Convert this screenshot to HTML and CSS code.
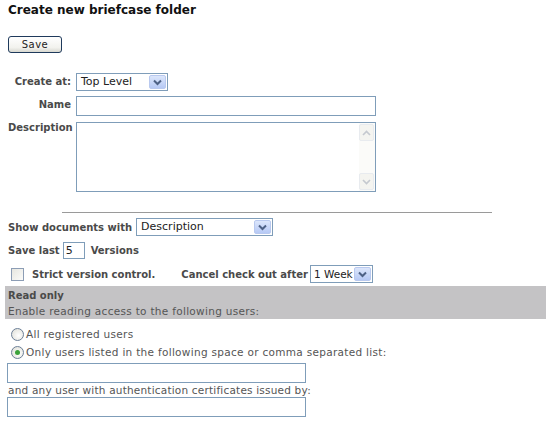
FILE: index.html
```html
<!DOCTYPE html>
<html lang="en">
<head>
  <meta charset="UTF-8" />
  <title>Create new briefcase folder</title>
  <link rel="stylesheet" href="styles.css">
</head>
<body>
  <div class="page">
    <h1>Create new briefcase folder</h1>
    <button class="btn">Save</button>

    <div class="form-grid">
      <label class="lbl row-select">Create at:</label>
      <div class="row-select">
        <span class="select w-top">
          <span class="select-text">Top Level</span>
          <span class="select-arrow"><svg width="9" height="7" viewBox="0 0 9 7"><path d="M1 1.5 L4.5 5 L8 1.5" fill="none" stroke="#4d6185" stroke-width="2"/></svg></span>
        </span>
      </div>

      <label class="lbl row-name">Name</label>
      <div class="row-name"><input class="text w-name" type="text"></div>

      <label class="lbl row-desc">Description</label>
      <div class="row-desc">
        <div class="textarea">
          <textarea></textarea>
          <div class="scrollbar">
            <span class="sb-btn"><svg width="9" height="6" viewBox="0 0 9 6"><path d="M1 5 L4.5 1.5 L8 5" fill="none" stroke="#c5c9cf" stroke-width="1.6"/></svg></span>
            <span class="sb-track"></span>
            <span class="sb-btn"><svg width="9" height="6" viewBox="0 0 9 6"><path d="M1 1 L4.5 4.5 L8 1" fill="none" stroke="#c5c9cf" stroke-width="1.6"/></svg></span>
          </div>
        </div>
      </div>
    </div>

    <hr class="sep">

    <div class="line show-docs">
      <span class="lbl">Show documents with</span>
      <span class="select w-desc">
        <span class="select-text">Description</span>
        <span class="select-arrow"><svg width="9" height="7" viewBox="0 0 9 7"><path d="M1 1.5 L4.5 5 L8 1.5" fill="none" stroke="#4d6185" stroke-width="2"/></svg></span>
      </span>
    </div>

    <div class="line save-last">
      <span class="lbl">Save last</span>
      <input class="text w-num" type="text" value="5">
      <span class="lbl">Versions</span>
    </div>

    <div class="line strict">
      <span class="checkbox"></span>
      <span class="lbl">Strict version control.</span>
      <span class="lbl cancel">Cancel check out after</span>
      <span class="select w-week">
        <span class="select-text">1 Week</span>
        <span class="select-arrow"><svg width="9" height="7" viewBox="0 0 9 7"><path d="M1 1.5 L4.5 5 L8 1.5" fill="none" stroke="#4d6185" stroke-width="2"/></svg></span>
      </span>
    </div>

    <div class="band">
      <div class="lbl">Read only</div>
      <div class="band-sub">Enable reading access to the following users:</div>
    </div>

    <div class="radio-line first">
      <span class="radio"></span>
      <span>All registered users</span>
    </div>
    <div class="radio-line">
      <span class="radio checked"><span class="dot"></span></span>
      <span>Only users listed in the following space or comma separated list:</span>
    </div>
    <input class="text w-list list-one" type="text">
    <div class="plain">and any user with authentication certificates issued by:</div>
    <input class="text w-list" type="text">
  </div>
</body>
</html>
```

FILE: styles.css
```css
body {
  margin: 0;
  font-family: "DejaVu Sans", Verdana, sans-serif;
  font-size: 10px;
  color: #555;
  background: #fff;
}

.page {
  padding: 2px 8px 0 8px;
  width: 538px;
}

h1 {
  margin: 0;
  font-size: 12px;
  line-height: 16px;
  color: #111;
  font-weight: bold;
}

.btn {
  display: block;
  margin-top: 18px;
  width: 54px;
  height: 17px;
  padding: 0;
  font-family: inherit;
  font-size: 10px;
  letter-spacing: 0.5px;
  color: #222;
  border: 1px solid #1f3a5c;
  border-radius: 3px;
  background: linear-gradient(#ffffff, #f2f2ee 70%, #d8d8d0);
}

.lbl {
  font-weight: bold;
  color: #4a4a4a;
  font-size: 10px;
}

.form-grid {
  display: grid;
  grid-template-columns: 63px 1fr;
  column-gap: 5px;
  margin-top: 20px;
}

.form-grid .lbl {
  text-align: right;
  line-height: 18px;
}

.row-name {
  margin-top: 5px;
}

.row-desc {
  margin-top: 6px;
}

.row-desc.lbl {
  line-height: 12px;
}

.text {
  box-sizing: border-box;
  border: 1px solid #7f9db9;
  font-family: inherit;
  font-size: 11px;
  color: #222;
  padding: 0 3px;
  margin: 0;
  background: #fff;
}

.w-name {
  width: 300px;
  height: 20px;
  display: block;
}

.w-num {
  width: 22px;
  height: 17px;
  padding: 0 2px;
}

.w-list {
  display: block;
  width: 299px;
  height: 20px;
  margin-left: -1px;
}

.list-one {
  margin-top: 2px;
}

.select {
  display: inline-flex;
  box-sizing: border-box;
  height: 18px;
  border: 1px solid #7f9db9;
  background: #fff;
  align-items: stretch;
  vertical-align: middle;
  white-space: nowrap;
}

.select-text {
  flex: 1;
  min-width: 0;
  padding-left: 4px;
  font-size: 11px;
  line-height: 16px;
  color: #222;
  overflow: hidden;
}

.select-arrow {
  flex: none;
  width: 15px;
  margin: 1px;
  border: 1px solid #b9c9ef;
  border-radius: 2px;
  background: linear-gradient(#dce6fb, #b6c9f5);
  display: flex;
  align-items: center;
  justify-content: center;
}

.w-top { width: 92px; }
.w-desc { width: 137px; margin-left: 4px; }
.w-week { width: 63px; margin-left: 2px; }
.w-week .select-text { padding-left: 3px; font-size: 10.5px; }

.textarea {
  display: flex;
  box-sizing: border-box;
  width: 300px;
  height: 70px;
  border: 1px solid #7f9db9;
}

.textarea textarea {
  flex: 1;
  border: none;
  resize: none;
  outline: none;
}

.scrollbar {
  width: 15px;
  display: flex;
  flex-direction: column;
  background: #fbfbf9;
  padding: 1px 1px 1px 0;
}

.sb-btn {
  height: 15px;
  border: 1px solid #e8ebef;
  border-radius: 2px;
  background: #f4f4f0;
  display: flex;
  align-items: center;
  justify-content: center;
}

.sb-track {
  flex: 1;
}

.sep {
  width: 430px;
  margin: 20px auto 0 auto;
  border: none;
  border-top: 1px solid #9a9a9a;
  height: 0;
}

.line {
  display: flex;
  align-items: center;
}

.show-docs {
  margin-top: 5px;
  height: 18px;
}

.save-last {
  margin-top: 6px;
  height: 17px;
}

.save-last .w-num {
  margin: 0 6px 0 3px;
}

.strict {
  margin-top: 6px;
  height: 18px;
}

.checkbox {
  box-sizing: border-box;
  width: 13px;
  height: 13px;
  border: 1px solid #8c9db5;
  background: linear-gradient(135deg, #e6e6e0, #fbfbf9);
  margin: 0 8px 0 3px;
}

.cancel {
  margin-left: 26px;
}

.band {
  margin: 3px 0 0 -3px;
  width: 541px;
  height: 33px;
  background: #c4c3c5;
  padding: 2px 3px 0 3px;
  box-sizing: border-box;
}

.band .lbl {
  line-height: 16px;
}

.band-sub {
  font-size: 10.5px;
  line-height: 15px;
  color: #555;
  letter-spacing: 0.3px;
}

.radio-line {
  display: flex;
  align-items: center;
  height: 18px;
  font-size: 10.5px;
  letter-spacing: 0.3px;
}

.radio-line.first {
  margin-top: 6px;
}

.radio {
  box-sizing: border-box;
  width: 13px;
  height: 13px;
  border: 1px solid #6c7f97;
  border-radius: 50%;
  background: radial-gradient(circle at 60% 60%, #fff, #dcdcd4);
  margin: 0 2px 0 3px;
  display: flex;
  align-items: center;
  justify-content: center;
}

.dot {
  width: 5px;
  height: 5px;
  border-radius: 50%;
  background: #3ba23b;
}

.plain {
  font-size: 10.5px;
  letter-spacing: 0.2px;
  line-height: 14px;
}
```
